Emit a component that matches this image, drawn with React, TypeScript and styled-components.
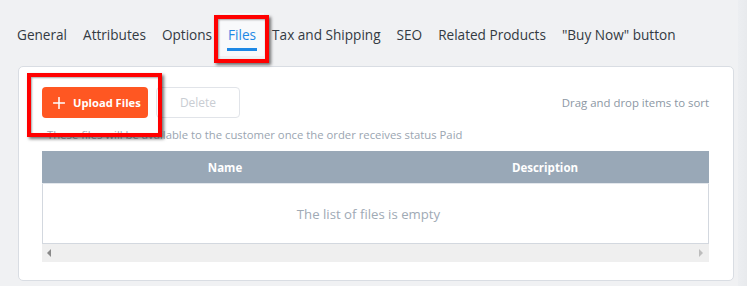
import React from "react";
import styled, { createGlobalStyle } from "styled-components";

const Global = createGlobalStyle`
  html, body { margin: 0; padding: 0; }
  body {
    background: #f0f1f3;
    font-family: "Open Sans", "Noto Sans", sans-serif;
    width: 747px;
    height: 286px;
    overflow: hidden;
  }
`;

const Page = styled.div`
  position: relative;
  width: 747px;
  height: 286px;
  box-sizing: border-box;
  padding: 0 13px 0 18px;
  display: flex;
  flex-direction: column;
`;

const Tabs = styled.nav`
  display: flex;
  align-items: flex-end;
  height: 66px;
  margin-left: -9px;
`;

const Tab = styled.div<{ $active?: boolean }>`
  position: relative;
  padding: 0 8px;
  height: 43px;
  display: flex;
  align-items: center;
  margin-bottom: 10px;
  font-size: 13.6px;
  color: ${(p) => (p.$active ? "#1e88e5" : "#333a42")};
  background: ${(p) => (p.$active ? "#f8f9fb" : "transparent")};
  &::after {
    content: "";
    display: ${(p) => (p.$active ? "block" : "none")};
    position: absolute;
    left: 7px;
    right: 7px;
    bottom: 5px;
    height: 3px;
    background: #1e88e5;
  }
`;

const Card = styled.section`
  background: #fff;
  border: 1px solid #d9dde3;
  border-radius: 5px;
  height: 215px;
  box-sizing: border-box;
  padding: 20px 24px 0 23px;
  display: flex;
  flex-direction: column;
`;

const Toolbar = styled.div`
  display: flex;
  align-items: center;
  gap: 8px;
`;

const PrimaryButton = styled.button`
  display: flex;
  align-items: center;
  gap: 8px;
  height: 31px;
  width: 106px;
  padding: 0 0 0 11px;
  border: none;
  border-radius: 4px;
  background: #ff5722;
  color: #fff;
  font-family: "Open Sans", sans-serif;
  font-weight: 700;
  font-size: 11.2px;
  cursor: pointer;
`;

const GhostButton = styled.button`
  height: 31px;
  width: 84px;
  border: 1px solid #e1e4e9;
  border-radius: 4px;
  background: #fff;
  color: #c9cdd3;
  font-family: "Open Sans", sans-serif;
  font-size: 12px;
`;

const SortHint = styled.span`
  margin-left: auto;
  color: #8c97a4;
  font-size: 11.4px;
`;

const Note = styled.p`
  margin: 8px 0 0 5px;
  color: #9aa5b1;
  font-size: 11.3px;
  line-height: 18px;
`;

const Table = styled.div`
  margin-top: 7px;
  display: flex;
  flex-direction: column;
`;

const HeadRow = styled.div`
  display: grid;
  grid-template-columns: 366px 274px 1fr;
  height: 32px;
  background: #99a8b7;
  border-bottom: 1px solid #e3e7ec;
`;

const HeadCell = styled.div`
  display: flex;
  align-items: center;
  justify-content: center;
  color: #fff;
  font-weight: 700;
  font-size: 11.5px;
`;

const Body = styled.div`
  height: 59px;
  border: 1px solid #d3d8df;
  border-top: none;
  display: flex;
  align-items: center;
  justify-content: center;
  padding-right: 14px;
  color: #a0aab5;
  font-size: 13.2px;
`;

const Scrollbar = styled.div`
  height: 18px;
  background: #efefef;
  display: flex;
  align-items: center;
  justify-content: space-between;
  padding: 0 6px 0 5px;
`;

const Arrow = styled.span<{ $dir: "left" | "right" }>`
  width: 0;
  height: 0;
  border-top: 4px solid transparent;
  border-bottom: 4px solid transparent;
  ${(p) =>
    p.$dir === "left"
      ? "border-right: 4px solid #8a8a8a;"
      : "border-left: 4px solid #bdbdbd;"}
`;

const Highlight = styled.div<{ $x: number; $y: number; $w: number; $h: number }>`
  position: absolute;
  left: ${(p) => p.$x}px;
  top: ${(p) => p.$y}px;
  width: ${(p) => p.$w}px;
  height: ${(p) => p.$h}px;
  box-sizing: border-box;
  border: 4px solid #ff0000;
  box-shadow: 2px 2px 3px rgba(0, 0, 0, 0.55), inset 1px 1px 2px rgba(0, 0, 0, 0.35);
  pointer-events: none;
`;

const EdgeShade = styled.div`
  position: absolute;
  top: 0;
  right: 0;
  width: 9px;
  height: 286px;
  background: linear-gradient(to right, #eceef1, #e8eaed);
`;

const PlusIcon = () => (
  <svg width="12" height="12" viewBox="0 0 12 12" aria-hidden="true">
    <path d="M6 0.5v11M0.5 6h11" stroke="#fff" strokeWidth="1.5" strokeLinecap="round" />
  </svg>
);

const tabs = ["General", "Attributes", "Options", "Files", "Tax and Shipping", "SEO", "Related Products", '"Buy Now" button'];

export default function App() {
  return (
    <>
      <Global />
      <Page>
        <EdgeShade />
        <Tabs>
          {tabs.map((t) => (
            <Tab key={t} $active={t === "Files"}>
              {t}
            </Tab>
          ))}
        </Tabs>
        <Card>
          <Toolbar>
            <PrimaryButton>
              <PlusIcon />
              Upload Files
            </PrimaryButton>
            <GhostButton>Delete</GhostButton>
            <SortHint>Drag and drop items to sort</SortHint>
          </Toolbar>
          <Note>These files will be available to the customer once the order receives status Paid</Note>
          <Table>
            <HeadRow>
              <HeadCell>Name</HeadCell>
              <HeadCell>Description</HeadCell>
              <HeadCell />
            </HeadRow>
            <Body>The list of files is empty</Body>
            <Scrollbar>
              <Arrow $dir="left" />
              <Arrow $dir="right" />
            </Scrollbar>
          </Table>
        </Card>
        <Highlight $x={214} $y={15} $w={55} $h={48} />
        <Highlight $x={27} $y={73} $w={135} $h={64} />
      </Page>
    </>
  );
}
